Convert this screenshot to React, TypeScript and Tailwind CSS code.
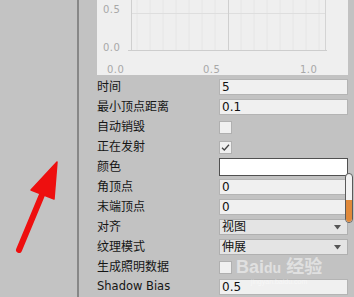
import React from "react";

const font = { fontFamily: '"DejaVu Sans", "Noto Sans CJK SC", sans-serif' };

function Label({ children, latin }: { children: React.ReactNode; latin?: boolean }) {
  return (
    <div className={`w-[140px] pl-[18px] shrink-0 text-[#151515] leading-none ${latin ? "text-[11.5px]" : "text-[12px]"}`}>
      {children}
    </div>
  );
}

function TextInput({ value }: { value: string }) {
  return (
    <div className="w-[129px] h-[16px] bg-[#f0f0f0] border border-[#b4b4b4] flex items-center pl-[2px] text-[12px] text-[#111] leading-none">
      {value}
    </div>
  );
}

function Check({ checked }: { checked?: boolean }) {
  return (
    <div className="w-[13px] h-[13px] bg-[#f0f0f0] border border-[#b0b0b0] flex items-center justify-center">
      {checked && (
        <svg width="9" height="9" viewBox="0 0 9 9">
          <path d="M1 4.8 L3.3 7 L8 1.8" fill="none" stroke="#444" strokeWidth="1.3" />
        </svg>
      )}
    </div>
  );
}

function Dropdown({ value }: { value: string }) {
  return (
    <div className="w-[129px] h-[16px] bg-[#e4e4e4] border border-[#b0b0b0] flex items-center justify-between pl-[2px] pr-[6px] text-[12px] text-[#111] leading-none">
      <span>{value}</span>
      <svg width="7" height="5" viewBox="0 0 7 5">
        <path d="M0 0 H7 L3.5 4.5 Z" fill="#555" />
      </svg>
    </div>
  );
}

function Row({ children }: { children: React.ReactNode }) {
  return <div className="h-[20px] flex items-center">{children}</div>;
}

export default function App() {
  return (
    <div className="w-[354px] h-[297px] flex bg-[#c2c2c2] relative overflow-hidden" style={font}>
      {/* left panel */}
      <div className="w-[77px] h-full bg-[#c3c3c3] relative shrink-0">
        <svg className="absolute left-0 top-0" width="77" height="297" viewBox="0 0 77 297">
          <line x1="19" y1="250" x2="44" y2="190" stroke="#ee0f0f" strokeWidth="6" strokeLinecap="round" />
          <path d="M57 162 L31 190 L54 199 Z" fill="#ee0f0f" stroke="#ee0f0f" strokeWidth="1.5" strokeLinejoin="round" />
        </svg>
      </div>
      <div className="w-[2px] h-full bg-[#878787] shrink-0" />
      {/* right panel */}
      <div className="flex-1 flex flex-col">
        <div className="ml-[18px] w-[251px] h-[75px] bg-[#efefef] shrink-0">
          <svg width="251" height="75" viewBox="0 0 251 75">
            {[40, 53, 66, 79, 92, 105, 118, 144, 157, 170, 183, 196, 209, 222].map((x) => (
              <line key={x} x1={x} y1="0" x2={x} y2="50" stroke="#e6e6e6" strokeWidth="1" />
            ))}
            <line x1="34" y1="13.5" x2="228" y2="13.5" stroke="#dedede" strokeWidth="1" />
            <line x1="34.5" y1="0" x2="34.5" y2="50" stroke="#cfcfcf" strokeWidth="1" />
            <line x1="131.5" y1="0" x2="131.5" y2="50" stroke="#cfcfcf" strokeWidth="1" />
            <line x1="228.5" y1="0" x2="228.5" y2="50" stroke="#d4d4d4" strokeWidth="1" />
            <line x1="31" y1="50.5" x2="230" y2="50.5" stroke="#cdcdcd" strokeWidth="1" />
            <g fill="#a8a8a8" fontSize="10" letterSpacing="0.5" style={{ fontFamily: '"DejaVu Sans", sans-serif' }}>
              <text x="6" y="13">0.5</text>
              <text x="6" y="51">0.0</text>
              <text x="10" y="73">0.0</text>
              <text x="106" y="73">0.5</text>
              <text x="203" y="73">1.0</text>
            </g>
          </svg>
        </div>
        <div className="pt-[2px] flex flex-col">
          <Row><Label>时间</Label><TextInput value="5" /></Row>
          <Row><Label>最小顶点距离</Label><TextInput value="0.1" /></Row>
          <Row><Label>自动销毁</Label><Check /></Row>
          <Row><Label>正在发射</Label><Check checked /></Row>
          <Row>
            <Label>颜色</Label>
            <div className="w-[129px] h-[18px] bg-white border border-[#505050]" />
          </Row>
          <Row><Label>角顶点</Label><TextInput value="0" /></Row>
          <Row><Label>末端顶点</Label><TextInput value="0" /></Row>
          <Row><Label>对齐</Label><Dropdown value="视图" /></Row>
          <Row><Label>纹理模式</Label><Dropdown value="伸展" /></Row>
          <Row><Label>生成照明数据</Label><Check /></Row>
          <Row><Label latin>Shadow Bias</Label><TextInput value="0.5" /></Row>
        </div>
      </div>
      {/* scrollbar */}
      <div className="absolute left-[345px] top-[173px] w-[8px] h-[50px] rounded-full border border-[#5a5a5a] bg-[#f2f2f2] overflow-hidden flex flex-col justify-end">
        <div className="h-[22px] bg-[#e0893a] rounded-b-full" />
      </div>
      {/* watermark */}
      <div className="absolute left-[236px] top-[258px] flex flex-col items-center pointer-events-none opacity-50">
        <div className="text-[18px] font-bold text-white leading-none" style={{ fontFamily: '"Liberation Sans", "Noto Sans CJK SC", sans-serif' }}>
          Bai<span className="text-[14px]">du</span> 经验
        </div>
        <div className="text-[7px] text-white leading-none mt-[2px]" style={{ fontFamily: '"Liberation Sans", sans-serif' }}>
          jingyan.baidu.com
        </div>
      </div>
    </div>
  );
}
